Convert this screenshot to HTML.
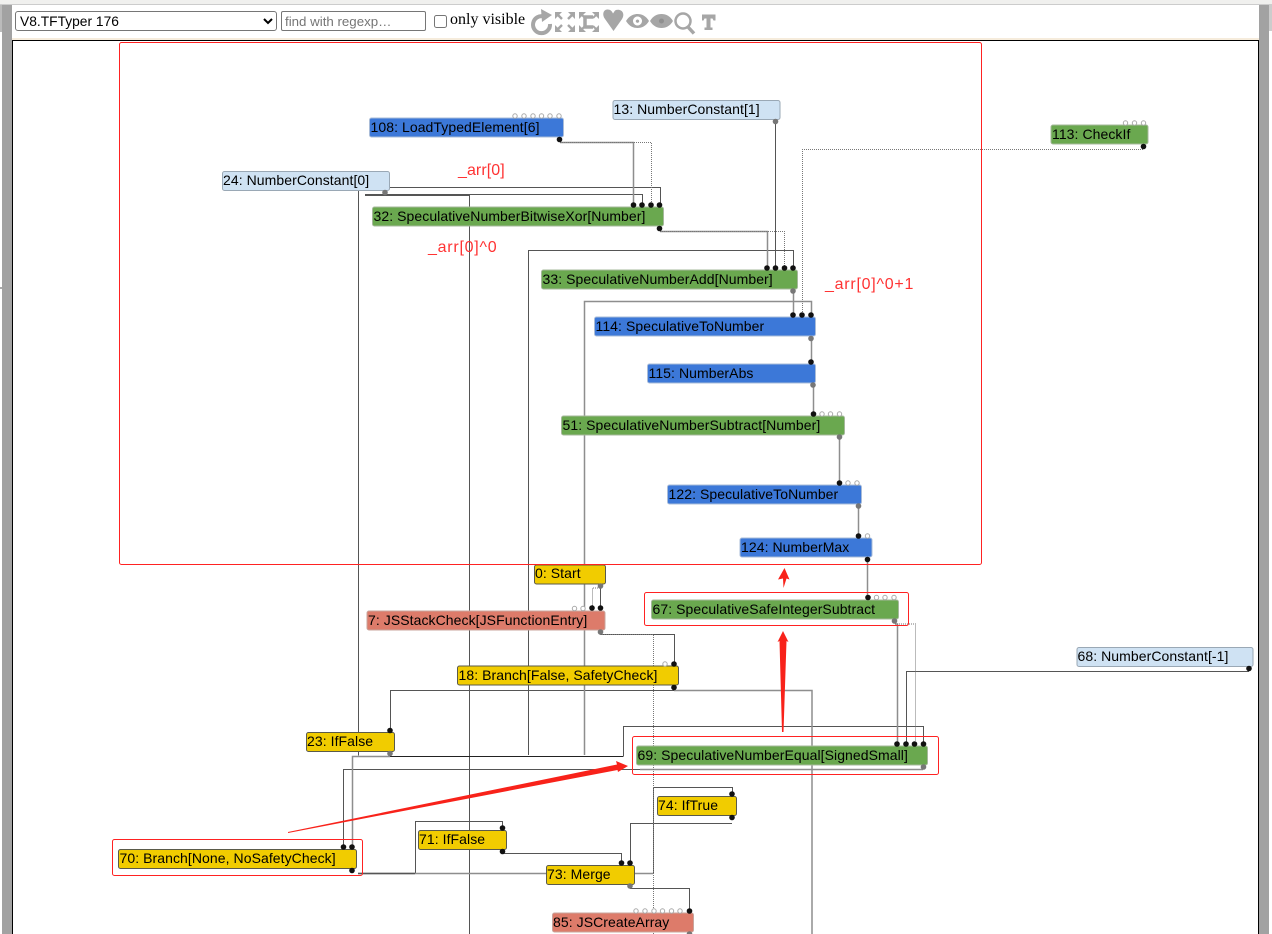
<!DOCTYPE html>
<html><head><meta charset="utf-8"><title>Turbolizer</title>
<style>
html,body{margin:0;padding:0;width:1272px;height:934px;overflow:hidden;background:#fff}
.a{position:absolute}
select,input[type=text]{box-sizing:border-box;font-family:"Liberation Sans",sans-serif;font-size:13.3px;margin:0}
svg text{font-family:"Liberation Sans",sans-serif;font-size:14px;fill:#000;letter-spacing:.07px}
.d circle{r:2.8px}
.h circle{r:2.2px}
</style></head><body>
<div class="a" style="left:0;top:0;width:1272px;height:4px;background:#f0f0ee"></div>
<div class="a" style="left:0;top:4px;width:1272px;height:1px;background:#ccc"></div>
<div class="a" style="left:0;top:5px;width:2px;height:27px;background:#bbb"></div>
<div class="a" style="left:2px;top:5px;width:10px;height:929px;background:#a2a2a2"></div>
<div class="a" style="left:0;top:287px;width:2px;height:2px;background:#aaa"></div>
<div class="a" style="left:1259px;top:5px;width:10px;height:929px;background:#a2a2a2"></div>
<div class="a" style="left:1269px;top:5px;width:3px;height:26px;background:#ccc"></div>
<div class="a" style="left:12px;top:38px;width:1247px;height:2px;background:#f6ecdc"></div>
<select class="a" style="left:15px;top:11px;width:262px;height:20px;background:#fff;border:1px solid #767676;border-radius:3px;padding:0;font-size:13.8px"><option>V8.TFTyper 176</option></select>
<input class="a" type="text" placeholder="find with regexp…" style="left:281px;top:11px;width:145px;height:20px;border:1px solid #767676;border-radius:2px;padding:1px 3px">
<input class="a" type="checkbox" style="left:434px;top:15px;width:13px;height:13px;margin:0">
<div class="a" style="left:450px;top:11px;font:16px/18px 'Liberation Serif',serif;color:#000;white-space:nowrap">only visible</div>

<svg class="a" style="left:528px;top:6px" width="192" height="32" viewBox="528 6 192 32">
<g fill="#a6a6a6" stroke="none">
<path d="M544 16.500A8.500 8.500 0 1 0 550 24" fill="none" stroke="#a6a6a6" stroke-width="4"/>
<path d="M541 9L552 15 542 22z"/>
<g stroke="#a6a6a6" stroke-width="2.400" fill="none"><path d="M557 14l5 5M573 14l-5 5M557 30l5-5M573 30l-5-5"/></g>
<path d="M555 12h7l-7 7zM575 12h-7l7 7zM555 32h7l-7-7zM575 32h-7l7-7z"/>
<g stroke="#a6a6a6" stroke-width="2" fill="none"><path d="M580 13l5 5M598 13l-5 5M580 31l5-5M598 31l-5-5"/><path d="M593 17h-8v10h8" stroke-width="3.500"/></g>
<path d="M579 12h7l-7 7zM599 12h-7l7 7zM579 32h7l-7-7zM599 32h-7l7-7z"/>
<path d="M613.500 31L605 19c-3-4-2-9 2-9.500 3-.3 5 1.500 6 4l2-3c3-1.500 7-.5 8 2.500 1 3-.5 5.500-2 7.500z"/>
<path fill-rule="evenodd" d="M626 21c3-5 7-7 11.500-7s8.500 2 11.500 7c-3 5-7 7-11.500 7s-8.500-2-11.500-7zM637.500 16.500a4.500 4.500 0 1 0 .01 0zM637.500 19.500a1.700 1.700 0 1 1-.01 0z"/>
<path d="M650 21c3-5 7-7 11.500-7s8.500 2 11.500 7c-3 5-7 7-11.500 7s-8.500-2-11.500-7z"/>
<circle cx="661.500" cy="21" r="2.500" fill="#8f8f8f"/>
<circle cx="683" cy="21" r="7.500" fill="none" stroke="#a6a6a6" stroke-width="2.500"/>
<path d="M688 27l6 6.500" stroke="#a6a6a6" stroke-width="3.500"/>
<path d="M702 14.500h13.500v6h-2l-1-2h-2v9h2v2.500h-8v-2.500h2v-9h-2l-1 2h-1.500z"/>
</g></svg>

<svg class="a" style="left:0;top:0" width="1272" height="934" viewBox="0 0 1272 934">
<!-- frame -->
<path d="M12.500 934V40.500H1258.500V934" fill="none" stroke="#000" stroke-width="1"/>

<!-- solid thin edges -->
<g fill="none" stroke="#555" stroke-width="1">
<path d="M775.500 122V268"/>
<path d="M390 187.500H660.500V205"/>
<path d="M365 194.500H642.500V205"/>
<path d="M358.500 190V755.500"/>
<path d="M469.500 195V934"/>
<path d="M528.500 755V250.500H793.500V268"/>
<path d="M1249 671.500H906.500V744"/>
<path d="M623.500 756V726.500H923.500V744"/>
<path d="M390.500 730V690.500H674"/>
<path d="M415.500 873V821.500H502.500V828"/>
<path d="M653.500 873V787.500H732.500V794"/>
<path d="M502 853.500H621.500V863"/>
<path d="M732 823.500H630.500V863"/>
<path d="M630 888.500H689.500V911"/>
<path d="M343.500 847V769.500H640"/>
<path d="M600.500 588V609"/>
<path d="M600 634.500H674.500V664"/>
</g>
<path d="M365 195H469" stroke="#555" stroke-width="2"/>
<!-- thick gray edges -->
<g fill="none" stroke="#8e8e8e" stroke-width="1.500">
<path d="M633.500 205V142.500H560"/>
<path d="M767.500 268V231.500H660"/>
<path d="M793.500 291V315"/>
<path d="M584.500 755V301.500H811.500V315"/>
<path d="M811.500 339V362"/>
<path d="M813.500 385V414"/>
<path d="M839.500 437V483"/>
<path d="M858.500 506V536"/>
<path d="M867.500 559V597"/>
<path d="M897.500 744V624H895"/>
<path d="M352.500 847V756.500H390"/>
<path d="M674 690.500H812V934"/>
<path d="M358 873.500H653"/>
<path d="M640 769.500H923"/>
</g>
<path d="M390 756.500H623.500" stroke="#222" stroke-width="1"/>
<path d="M358 873.500H415" stroke="#555" stroke-width="1.500"/>
<!-- dotted edges -->
<g fill="none" stroke="#777" stroke-width="1" stroke-dasharray="1 1">
<path d="M560 142.500H651.500V205"/>
<path d="M660 231.500H784.500V268"/>
<path d="M1143 149.500H802.500V315"/>
<path d="M895 624H915.500V744"/>
<path d="M600 588H592.500V609"/>
<path d="M600 634.500H653.500V934"/>
</g>

<!-- nodes -->
<g stroke-width="1">
<g fill="#cfe2f3" stroke="#9aa8b5">
<rect x="613" y="100.500" width="167" height="19" rx="2"/>
<rect x="222.500" y="171.500" width="167" height="19" rx="2"/>
<rect x="1077" y="647.500" width="176" height="19" rx="2"/>
</g>
<g fill="#3c78d8" stroke="#a9bcd8">
<rect x="369.500" y="118" width="194" height="19" rx="2"/>
<rect x="594.500" y="317" width="221" height="19" rx="2"/>
<rect x="647.500" y="364" width="168" height="19" rx="2"/>
<rect x="667.500" y="485" width="194" height="19" rx="2"/>
<rect x="740" y="538" width="132" height="19" rx="2"/>
</g>
<g fill="#6aa84f" stroke="#a5b89b">
<rect x="1051" y="125" width="97" height="19" rx="2"/>
<rect x="372.500" y="207" width="291" height="19" rx="2"/>
<rect x="541.500" y="270" width="256" height="19" rx="2"/>
<rect x="561.500" y="416" width="283" height="19" rx="2"/>
<rect x="651.500" y="600" width="247" height="19" rx="2"/>
<rect x="636.500" y="746" width="291" height="19" rx="2"/>
</g>
<g fill="#f1cc00" stroke="#5a5a4a">
<rect x="534.500" y="565" width="71" height="19" rx="2"/>
<rect x="457.500" y="666" width="221" height="19" rx="2"/>
<rect x="306.500" y="732.500" width="88" height="19" rx="2"/>
<rect x="657.500" y="796.500" width="79" height="19" rx="2"/>
<rect x="418.500" y="830.500" width="88" height="19" rx="2"/>
<rect x="118.500" y="849.500" width="238" height="19" rx="2"/>
<rect x="546.500" y="865.500" width="88" height="19" rx="2"/>
</g>
<g fill="#dd7b6a" stroke="#c9a49c">
<rect x="367" y="611" width="238" height="19" rx="2"/>
<rect x="552.500" y="913" width="141" height="19" rx="2"/>
</g>
</g>

<text x="613.500" y="114">13: NumberConstant[1]</text>
<text x="370.500" y="132">108: LoadTypedElement[6]</text>
<text x="1052" y="139">113: CheckIf</text>
<text x="223" y="185">24: NumberConstant[0]</text>
<text x="373.500" y="221">32: SpeculativeNumberBitwiseXor[Number]</text>
<text x="542.500" y="284">33: SpeculativeNumberAdd[Number]</text>
<text x="595.500" y="331">114: SpeculativeToNumber</text>
<text x="648.500" y="378">115: NumberAbs</text>
<text x="562.500" y="430">51: SpeculativeNumberSubtract[Number]</text>
<text x="668.500" y="499">122: SpeculativeToNumber</text>
<text x="741" y="552">124: NumberMax</text>
<text x="535" y="578">0: Start</text>
<text x="368" y="625">7: JSStackCheck[JSFunctionEntry]</text>
<text x="652.500" y="614">67: SpeculativeSafeIntegerSubtract</text>
<text x="458.500" y="680">18: Branch[False, SafetyCheck]</text>
<text x="1077.500" y="661">68: NumberConstant[-1]</text>
<text x="307" y="746">23: IfFalse</text>
<text x="637.500" y="760">69: SpeculativeNumberEqual[SignedSmall]</text>
<text x="658" y="810">74: IfTrue</text>
<text x="419" y="844">71: IfFalse</text>
<text x="119.500" y="863">70: Branch[None, NoSafetyCheck]</text>
<text x="547" y="879">73: Merge</text>
<text x="553" y="927">85: JSCreateArray</text>

<!-- hollow connectors -->
<g class="h" fill="#fff" stroke="#aaa" stroke-width="1">
<circle cx="515" cy="116" r="2"/><circle cx="524" cy="116" r="2"/><circle cx="533" cy="116" r="2"/><circle cx="541.500" cy="116" r="2"/><circle cx="550" cy="116" r="2"/><circle cx="559" cy="116" r="2"/>
<circle cx="1125.500" cy="123" r="2"/><circle cx="1134.500" cy="123" r="2"/><circle cx="1143.500" cy="123" r="2"/>
<circle cx="822" cy="414" r="2"/><circle cx="830.500" cy="414" r="2"/><circle cx="839.500" cy="414" r="2"/>
<circle cx="848" cy="483" r="2"/><circle cx="857" cy="483" r="2"/>
<circle cx="867.500" cy="536" r="2"/>
<circle cx="574.500" cy="608.500" r="2"/><circle cx="583" cy="608.500" r="2"/>
<circle cx="876.500" cy="597.500" r="2"/><circle cx="885" cy="597.500" r="2"/><circle cx="894" cy="597.500" r="2"/>
<circle cx="665" cy="664" r="2"/>
<circle cx="636" cy="911" r="2"/><circle cx="645" cy="911" r="2"/><circle cx="654" cy="911" r="2"/><circle cx="662.500" cy="911" r="2"/><circle cx="671.500" cy="911" r="2"/><circle cx="680" cy="911" r="2"/>
</g>
<!-- solid connectors -->
<g class="d" fill="#111">
<circle cx="559.500" cy="139.500" r="2.500"/>
<circle cx="633.500" cy="205" r="2.500"/><circle cx="642" cy="205" r="2.500"/><circle cx="651" cy="205" r="2.500"/><circle cx="659.500" cy="205" r="2.500"/>
<circle cx="659.500" cy="228.500" r="2.500"/>
<circle cx="767" cy="268" r="2.500"/><circle cx="775.500" cy="268" r="2.500"/><circle cx="784.500" cy="268" r="2.500"/><circle cx="793" cy="268" r="2.500"/>
<circle cx="793" cy="315" r="2.500"/><circle cx="802" cy="315" r="2.500"/><circle cx="811" cy="315" r="2.500"/>
<circle cx="811" cy="362" r="2.500"/>
<circle cx="813.500" cy="414" r="2.500"/>
<circle cx="839.500" cy="483" r="2.500"/>
<circle cx="858.500" cy="536" r="2.500"/>
<circle cx="867.500" cy="559.500" r="2.500"/>
<circle cx="868" cy="597.500" r="2.500"/>
<circle cx="1143.500" cy="146.500" r="2.500"/>
<circle cx="592" cy="608" r="2.500"/><circle cx="600.500" cy="608" r="2.500"/>
<circle cx="674" cy="664" r="2.500"/><circle cx="674" cy="687.500" r="2.500"/>
<circle cx="390" cy="730.500" r="2.500"/>
<circle cx="897" cy="744" r="2.500"/><circle cx="906" cy="744" r="2.500"/><circle cx="914.500" cy="744" r="2.500"/><circle cx="923.500" cy="744" r="2.500"/>
<circle cx="1249" cy="668.500" r="2.500"/>
<circle cx="732" cy="794" r="2.500"/><circle cx="732" cy="817.500" r="2.500"/>
<circle cx="502.500" cy="828" r="2.500"/><circle cx="502.500" cy="851.500" r="2.500"/>
<circle cx="343.500" cy="847" r="2.500"/><circle cx="352" cy="847" r="2.500"/><circle cx="352" cy="870.500" r="2.500"/>
<circle cx="621.500" cy="863" r="2.500"/><circle cx="630" cy="863" r="2.500"/>
<circle cx="689.500" cy="911" r="2.500"/>
</g>
<!-- gray out connectors -->
<g class="d" fill="#777">
<circle cx="775.500" cy="121.500" r="2.500"/>
<circle cx="385" cy="192.500" r="2.500"/>
<circle cx="793" cy="291" r="2.500"/>
<circle cx="811" cy="338.500" r="2.500"/>
<circle cx="813" cy="385" r="2.500"/>
<circle cx="839.500" cy="437" r="2.500"/>
<circle cx="858.500" cy="506" r="2.500"/>
<circle cx="600.500" cy="586" r="2.500"/>
<circle cx="600.500" cy="632" r="2.500"/>
<circle cx="894.500" cy="621" r="2.500"/>
<circle cx="390" cy="753.500" r="2.500"/>
<circle cx="923.500" cy="767" r="2.500"/>
<circle cx="630" cy="886" r="2.500"/>
<circle cx="689.500" cy="934" r="2.500"/>
</g>

<!-- annotations -->
<g fill="none" stroke="#f22" stroke-width="1">
<rect x="119.500" y="42.500" width="862" height="522" rx="2"/>
<rect x="644.500" y="592.500" width="264" height="33" rx="2"/>
<rect x="632.500" y="736.500" width="306" height="38" rx="2"/>
<rect x="112.500" y="839.500" width="250" height="36" rx="2"/>
</g>
<g fill="#f8221a">
<path d="M288 832L617 764.500 616 761 628 766 618 772 617.500 770 288 833z"/>
<path d="M782 732L779.500 641 777.500 642 783 631 788.500 642 786.500 641 783.500 732z"/>
<path d="M783.500 588L783 578.500 778 579.500 784.500 568 789.500 579.500 786.500 578.500z"/>
</g>
<text x="458" y="175" style="font-size:16px;fill:#f33">_arr[0]</text>
<text x="428" y="252" style="font-size:16px;fill:#f33;letter-spacing:.75px">_arr[0]^0</text>
<text x="825" y="289" style="font-size:16px;fill:#f33;letter-spacing:.75px">_arr[0]^0+1</text>
</svg>
</body></html>
